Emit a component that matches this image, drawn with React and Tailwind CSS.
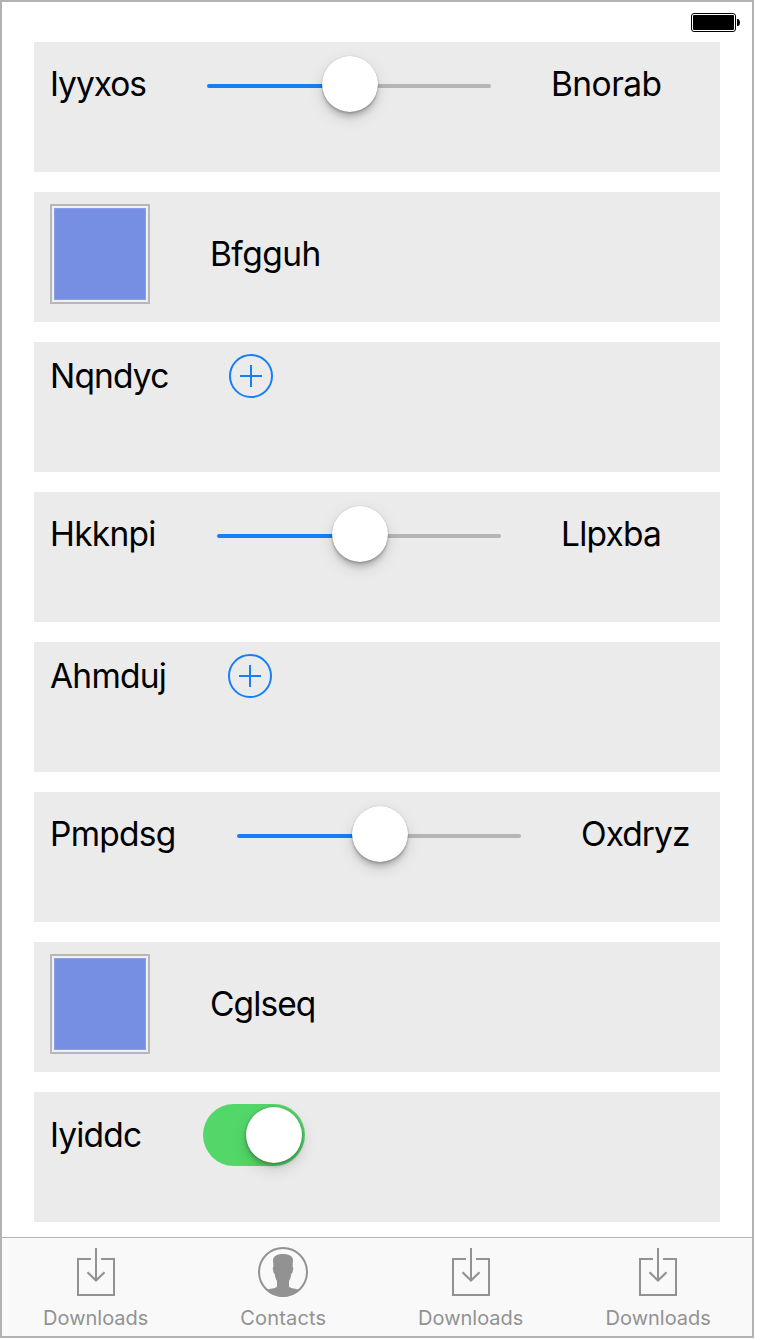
import React from "react";

const rows = [
  { kind: "slider", label: "Iyyxos", width: "w-[157px]", spacing: "tracking-[-1.05px]", end: "Bnorab", endSpacing: "tracking-[-0.55px]" },
  { kind: "swatch", label: "Bfgguh", spacing: "tracking-[-0.55px]" },
  { kind: "add", label: "Nqndyc", width: "w-[179px]", spacing: "tracking-[-0.85px]" },
  { kind: "slider", label: "Hkknpi", width: "w-[167px]", spacing: "tracking-[-0.75px]", end: "Llpxba", endSpacing: "tracking-[-0.8px]" },
  { kind: "add", label: "Ahmduj", width: "w-[178px]", spacing: "tracking-[-0.75px]" },
  { kind: "slider", label: "Pmpdsg", width: "w-[187px]", spacing: "tracking-[-0.75px]", end: "Oxdryz", endSpacing: "tracking-[-0.95px]" },
  { kind: "swatch", label: "Cglseq", spacing: "tracking-[-0.9px]" },
  { kind: "switch", label: "Iyiddc", width: "w-[153px]", spacing: "tracking-[-0.85px]" },
];

function Label({ children, width = "", spacing }) {
  return (
    <span
      className={`shrink-0 whitespace-nowrap text-[33.5px] leading-[40px] text-black [font-feature-settings:'calt'_0] ${width} ${spacing}`}
    >
      {children}
    </span>
  );
}

function Slider() {
  return (
    <div className="relative flex h-[60px] w-[284px] shrink-0 items-center pt-1">
      <div className="h-1 w-1/2 rounded-l-full bg-[#147efb]" />
      <div className="h-1 w-1/2 rounded-r-full bg-[#b5b5b5]" />
      <div className="absolute left-[115px] top-[2px] size-14 rounded-full bg-white shadow-[0_0_1px_rgba(0,0,0,0.3),0_6px_4px_rgba(0,0,0,0.12),0_2px_2px_rgba(0,0,0,0.18),0_6px_16px_rgba(0,0,0,0.12)]" />
    </div>
  );
}

function Swatch() {
  return (
    <div className="size-[100px] shrink-0 border-2 border-[#b7b7b7] bg-[#eff0f5] p-[2px]">
      <div className="size-full border border-[#8c9fe6] bg-[#768fe2]" />
    </div>
  );
}

function AddButton() {
  return (
    <svg className="size-11 shrink-0" viewBox="0 0 44 44" fill="none" stroke="#147efb" strokeWidth="2">
      <circle cx="22" cy="22" r="21" />
      <path d="M11 22h22M22 11v22" />
    </svg>
  );
}

function Switch() {
  return (
    <div className="flex h-[62px] w-[102px] shrink-0 items-center justify-end rounded-full bg-[#53d769] pr-[3px]">
      <div className="size-14 rounded-full bg-white shadow-[0_0_2px_rgba(0,0,0,0.3),0_3px_4px_rgba(0,0,0,0.22),0_6px_16px_rgba(0,0,0,0.15)]" />
    </div>
  );
}

function Row({ row }) {
  return (
    <div className="h-[130px] shrink-0 bg-[#ebebeb] pl-4 pt-3">
      {row.kind === "swatch" ? (
        <div className="flex items-center gap-[60px]">
          <Swatch />
          <Label spacing={row.spacing}>{row.label}</Label>
        </div>
      ) : (
        <div className="flex items-center">
          <Label width={row.width} spacing={row.spacing}>{row.label}</Label>
          {row.kind === "slider" && (
            <>
              <Slider />
              <div className="w-[60px] shrink-0" />
              <Label spacing={row.endSpacing}>{row.end}</Label>
            </>
          )}
          {row.kind === "add" && <AddButton />}
          {row.kind === "switch" && <Switch />}
        </div>
      )}
    </div>
  );
}

function DownloadIcon() {
  return (
    <svg className="h-[50px] w-[50px]" viewBox="0 0 50 50" fill="none" stroke="#929292" strokeWidth="2">
      <path d="M20 12H7v36h36V12H30" />
      <path d="M25 1v33" />
      <path d="M16.5 25.3l8.5 8.2 8.5-8.2" strokeWidth="2.2" />
    </svg>
  );
}

function ContactIcon() {
  return (
    <svg className="h-[50px] w-[50px]" viewBox="0 0 50 50">
      <circle cx="25" cy="25" r="24" fill="none" stroke="#929292" strokeWidth="2" />
      <path
        fill="#929292"
        d="M15 12.500C16 8.500 20 7 25 7s9 1.500 10 5.500L34.600 19.500l.7 1.500-.8 4.500-1.200 1.500c-.3 2.500-.9 5-2.300 7v5c0 2 5 2.500 9.700 3.500C36.500 47 31 50 25 50S13.500 47 9.300 42.500c4.700-1 9.700-1.500 9.700-3.500v-5c-1.400-2-2-4.500-2.300-7l-1.200-1.500-.8-4.500.7-1.500z"
      />
    </svg>
  );
}

function Tab({ icon, label, spacing }) {
  return (
    <div className="flex flex-1 flex-col items-center pt-[9px]">
      {icon}
      <span className={`mt-[9px] whitespace-nowrap text-[20px] leading-6 text-[#929292] ${spacing}`}>{label}</span>
    </div>
  );
}

export default function App() {
  return (
    <div className="h-[1340px] w-[760px] bg-white font-['Inter',sans-serif]">
      <div className="flex h-[1338px] w-[754px] flex-col border-2 border-[#b2b2b2] bg-white">
        <div className="flex h-10 shrink-0 justify-end pr-3 pt-[11px]">
          <svg className="h-[19px] w-[49px]" viewBox="0 0 49 19">
            <rect x="0.5" y="0.5" width="44" height="18" rx="2.5" fill="none" stroke="#000" />
            <rect x="2" y="2" width="41" height="15" rx="1" />
            <path d="M46 6h1.200q1.800 1 1.800 3.500t-1.800 3.500H46z" />
          </svg>
        </div>
        <div className="flex flex-col gap-5 pl-8 pr-8">
          {rows.map((row) => (
            <Row key={row.label} row={row} />
          ))}
        </div>
        <div className="mt-[15px] flex flex-1 border-t border-[#b2b2b2] bg-[#f9f9f9]">
          <Tab icon={<DownloadIcon />} label="Downloads" spacing="tracking-[0px]" />
          <Tab icon={<ContactIcon />} label="Contacts" spacing="tracking-[0.2px]" />
          <Tab icon={<DownloadIcon />} label="Downloads" spacing="tracking-[0px]" />
          <Tab icon={<DownloadIcon />} label="Downloads" spacing="tracking-[0px]" />
        </div>
      </div>
    </div>
  );
}
